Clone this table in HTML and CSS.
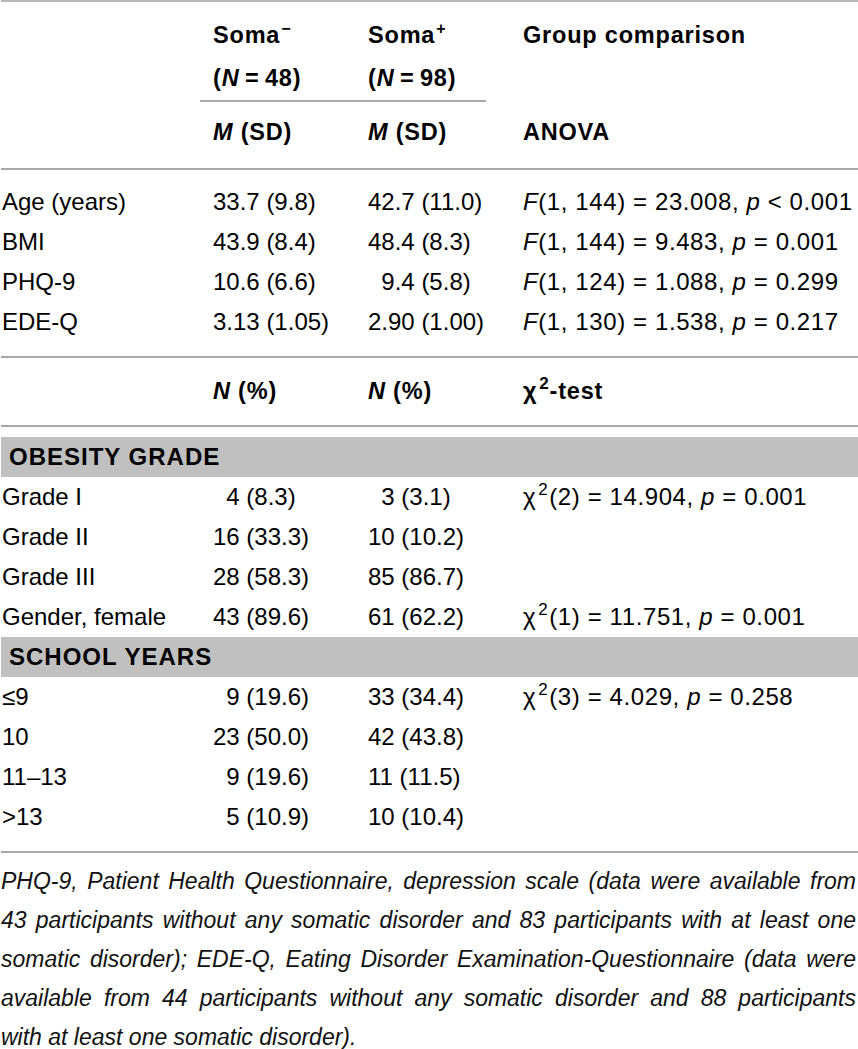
FILE: index.html
```html
<!DOCTYPE html>
<html lang="en">
<head>
<meta charset="utf-8">
<title>Table</title>
<link rel="stylesheet" href="styles.css">
</head>
<body>
<div class="tbl">
  <div class="head">
    <div class="grid htop">
      <div></div>
      <div class="soma">
        <div class="hcell">Soma<sup class="sp">−</sup><br>(<i>N</i>&thinsp;=&thinsp;48)</div>
        <div class="hcell">Soma<sup class="sp">+</sup><br>(<i>N</i>&thinsp;=&thinsp;98)</div>
      </div>
      <div class="hcell">Group comparison</div>
    </div>
    <div class="grid hsub">
      <div></div>
      <div><i>M</i> (SD)</div>
      <div><i>M</i> (SD)</div>
      <div>ANOVA</div>
    </div>
  </div>

  <div class="section ruled">
    <div class="grid row"><div>Age (years)</div><div>33.7 (9.8)</div><div>42.7 (11.0)</div><div class="stat"><i>F</i>(1, 144) = 23.008, <i>p</i> &lt; 0.001</div></div>
    <div class="grid row"><div>BMI</div><div>43.9 (8.4)</div><div>48.4 (8.3)</div><div class="stat"><i>F</i>(1, 144) = 9.483, <i>p</i> = 0.001</div></div>
    <div class="grid row"><div>PHQ-9</div><div>10.6 (6.6)</div><div>&#8199;9.4 (5.8)</div><div class="stat"><i>F</i>(1, 124) = 1.088, <i>p</i> = 0.299</div></div>
    <div class="grid row"><div>EDE-Q</div><div>3.13 (1.05)</div><div>2.90 (1.00)</div><div class="stat"><i>F</i>(1, 130) = 1.538, <i>p</i> = 0.217</div></div>
  </div>

  <div class="grid hmid">
    <div></div>
    <div><i>N</i> (%)</div>
    <div><i>N</i> (%)</div>
    <div>χ<sup class="sqb">2</sup>-test</div>
  </div>

  <div class="section last">
    <div class="band">OBESITY GRADE</div>
    <div class="grid row"><div>Grade I</div><div>&#8199;4 (8.3)</div><div>&#8199;3 (3.1)</div><div class="stat">χ<sup class="sq">2</sup>(2) = 14.904, <i>p</i> = 0.001</div></div>
    <div class="grid row"><div>Grade II</div><div>16 (33.3)</div><div>10 (10.2)</div><div></div></div>
    <div class="grid row"><div>Grade III</div><div>28 (58.3)</div><div>85 (86.7)</div><div></div></div>
    <div class="grid row"><div>Gender, female</div><div>43 (89.6)</div><div>61 (62.2)</div><div class="stat">χ<sup class="sq">2</sup>(1) = 11.751, <i>p</i> = 0.001</div></div>
    <div class="band">SCHOOL YEARS</div>
    <div class="grid row"><div>≤9</div><div>&#8199;9 (19.6)</div><div>33 (34.4)</div><div class="stat">χ<sup class="sq">2</sup>(3) = 4.029, <i>p</i> = 0.258</div></div>
    <div class="grid row"><div>10</div><div>23 (50.0)</div><div>42 (43.8)</div><div></div></div>
    <div class="grid row"><div>11–13</div><div>&#8199;9 (19.6)</div><div>11 (11.5)</div><div></div></div>
    <div class="grid row"><div>&gt;13</div><div>&#8199;5 (10.9)</div><div>10 (10.4)</div><div></div></div>
  </div>

  <div class="note">
    <span class="jl">PHQ-9, Patient Health Questionnaire, depression scale (data were available from</span>
    <span class="jl">43 participants without any somatic disorder and 83 participants with at least one</span>
    <span class="jl">somatic disorder); EDE-Q, Eating Disorder Examination-Questionnaire (data were</span>
    <span class="jl">available from 44 participants without any somatic disorder and 88 participants</span>
    <span class="ll">with at least one somatic disorder).</span>
  </div>
</div>
</body>
</html>
```

FILE: styles.css
```css
html {
  overflow: hidden;
}

body {
  margin: 0;
  background: #ffffff;
  color: #000000;
  font-family: "Liberation Sans", Arial, sans-serif;
  font-size: 24px;
}

.tbl {
  margin-left: 1px;
  border-top: 2px solid #b8b8b8;
}

.grid {
  display: grid;
  grid-template-columns: 212px 155px 155px 1fr;
}

.head {
  font-weight: bold;
  font-size: 23.5px;
  letter-spacing: 0.8px;
}

.htop {
  padding-top: 12px;
}

.hcell {
  line-height: 43px;
}

.soma {
  grid-column: 2 / 4;
  display: grid;
  grid-template-columns: 155px 1fr;
  margin-left: -13px;
  padding-left: 13px;
  margin-right: 37px;
  border-bottom: 2px solid #a8a8a8;
}

.sp {
  font-size: 16px;
  line-height: 0;
  vertical-align: 9px;
  margin-left: 1px;
}

.hsub {
  line-height: 40px;
  padding-top: 10px;
  padding-bottom: 16px;
  border-bottom: 2px solid #a8a8a8;
}

.section.ruled {
  padding-top: 12px;
  padding-bottom: 14px;
  border-bottom: 2px solid #a8a8a8;
}

.row {
  line-height: 40px;
  height: 40px;
  white-space: nowrap;
}

.row > div:first-child {
  padding-left: 1px;
}

.stat {
  letter-spacing: 0.6px;
}

.hmid {
  font-weight: bold;
  font-size: 23.5px;
  letter-spacing: 0.8px;
  line-height: 40px;
  padding-top: 13px;
  padding-bottom: 14px;
  border-bottom: 2px solid #a8a8a8;
}

.sqb {
  font-size: 17px;
  line-height: 0;
  vertical-align: 10px;
  margin-left: 2px;
}

.sq {
  font-size: 17px;
  line-height: 0;
  vertical-align: 10px;
  margin-left: 2px;
  margin-right: 1px;
}

.section.last {
  margin-top: 10px;
  padding-bottom: 14px;
  border-bottom: 2px solid #a8a8a8;
}

.band {
  background: #c0c0c0;
  height: 40px;
  line-height: 40px;
  padding-left: 8px;
  font-weight: bold;
  font-size: 24px;
  letter-spacing: 1px;
}

.note {
  padding-top: 9px;
  font-style: italic;
  font-size: 23px;
  line-height: 39px;
  color: #111111;
  padding-right: 2px;
}

.jl {
  display: block;
  text-align: justify;
  text-align-last: justify;
  white-space: nowrap;
}

.ll {
  display: block;
}
```
